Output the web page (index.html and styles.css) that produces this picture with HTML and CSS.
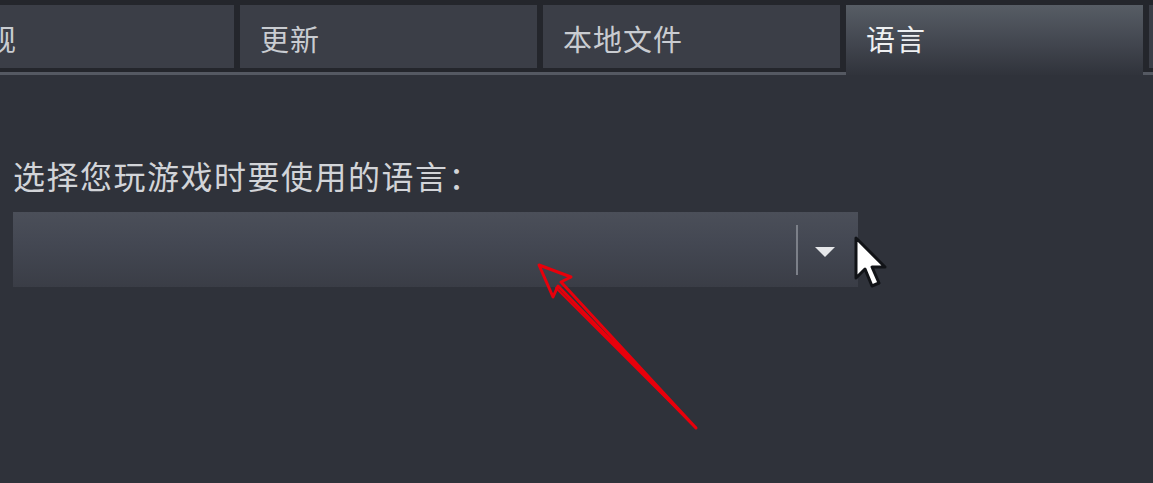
FILE: index.html
```
<!DOCTYPE html>
<html lang="zh-CN">
<head>
    <meta charset="UTF-8">
    <meta name="viewport" content="width=device-width, initial-scale=1.0">
    <title>语言</title>
    <link rel="stylesheet" href="styles.css">
</head>
<body>
    <div class="tab-bar">
        <div class="tabs">
            <div class="tab"><span class="tab-label">常规</span></div>
            <div class="tab"><span class="tab-label">更新</span></div>
            <div class="tab"><span class="tab-label">本地文件</span></div>
            <div class="tab active"><span class="tab-label">语言</span></div>
            <div class="tab"></div>
        </div>
    </div>

    <div class="content">
        <label class="field-label" for="language">选择您玩游戏时要使用的语言：</label>
        <div class="select" id="language">
            <div class="select-value"></div>
            <div class="select-divider"></div>
            <div class="select-arrow"></div>
        </div>
    </div>

    <!-- 鼠标指针 -->
    <svg class="cursor" width="40" height="56" viewBox="0 0 40 56">
        <path d="M3 2 L3 42 L12 33 L19 50 L26 47 L19 31 L32 31 Z" fill="#ffffff" stroke="#111317" stroke-width="3" stroke-linejoin="round"/>
    </svg>

    <!-- 红色标注箭头 -->
    <svg class="annotation" width="1153" height="483" viewBox="0 0 1153 483">
        <g fill="none" stroke="#e8000b" stroke-width="3" stroke-linejoin="round" stroke-linecap="round">
            <path d="M696 428 L558 286 L553 297 L539 265 L571 277 L561 282 L696 428"/>
            <line x1="696" y1="428" x2="556" y2="288" stroke-width="2"/>
        </g>
    </svg>
</body>
</html>
```

FILE: styles.css
```
:root {
    --bg-color: #2f323a;
    --bar-color: #24262c;
    --tab-color: #3b3e47;
    --line-color: #555962;
    --text-color: #d6d8dc;
}

body {
    margin: 0;
    background-color: var(--bg-color);
    color: var(--text-color);
    font-family: "Noto Sans CJK SC", "Noto Sans", sans-serif;
    width: 1153px;
    height: 483px;
    overflow: hidden;
    position: relative;
}

.tab-bar {
    background-color: var(--bar-color);
    padding-top: 5px;
    height: 67px;
    border-bottom: 3px solid var(--line-color);
    overflow: visible;
}

.tabs {
    display: flex;
    gap: 6px;
    margin-left: -63px;
}

.tab {
    flex: 0 0 297px;
    height: 63px;
    background-color: var(--tab-color);
    display: flex;
    align-items: flex-start;
    padding: 15px 0 0 20px;
    box-sizing: border-box;
}

.tab-label {
    font-size: 29px;
    line-height: 36px;
    letter-spacing: 1px;
    color: #c9ccd1;
}

.tab.active {
    height: 70px;
    position: relative;
    z-index: 1;
    background: linear-gradient(to bottom, #575d65 0%, #42464f 55%, #30333b 100%);
}

.tab.active .tab-label {
    color: #eef0f2;
}

.content {
    padding: 80px 13px 0 13px;
}

.field-label {
    display: block;
    font-size: 32px;
    letter-spacing: 1.5px;
    line-height: 40px;
    color: #d2d4d8;
    margin-bottom: 17px;
}

.select {
    width: 845px;
    height: 75px;
    display: flex;
    align-items: center;
    background: linear-gradient(to bottom, #4b4f59 0%, #444853 40%, #3a3d46 100%);
}

.select-value {
    flex: 1;
}

.select-divider {
    width: 2px;
    height: 50px;
    background-color: #7c8089;
}

.select-arrow {
    width: 0;
    height: 0;
    margin: 4px 23px 0 17px;
    border-left: 10px solid transparent;
    border-right: 10px solid transparent;
    border-top: 10px solid #e6e7ea;
}

.cursor {
    position: absolute;
    left: 853px;
    top: 236px;
}

.annotation {
    position: absolute;
    left: 0;
    top: 0;
    pointer-events: none;
}
```
